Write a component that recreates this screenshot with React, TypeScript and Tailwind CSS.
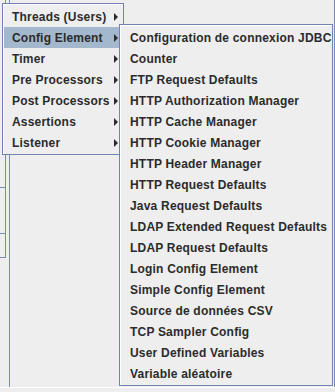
import React from 'react';

const mainItems = [
  'Threads (Users)',
  'Config Element',
  'Timer',
  'Pre Processors',
  'Post Processors',
  'Assertions',
  'Listener',
];

const configItems = [
  'Configuration de connexion JDBC',
  'Counter',
  'FTP Request Defaults',
  'HTTP Authorization Manager',
  'HTTP Cache Manager',
  'HTTP Cookie Manager',
  'HTTP Header Manager',
  'HTTP Request Defaults',
  'Java Request Defaults',
  'LDAP Extended Request Defaults',
  'LDAP Request Defaults',
  'Login Config Element',
  'Simple Config Element',
  'Source de données CSV',
  'TCP Sampler Config',
  'User Defined Variables',
  'Variable aléatoire',
];

const Arrow: React.FC = () => (
  <span className="ml-auto h-0 w-0 shrink-0 border-y-[4px] border-l-[4px] border-y-transparent border-l-[#2a2a2a]" />
);

const App: React.FC = () => {
  return (
    <div
      className="relative h-[392px] w-[335px] overflow-hidden bg-[#eeeeee] text-[12px] font-bold tracking-[0.2px] text-[#2b2b2b]"
      style={{ fontFamily: '"Liberation Sans", Arial, sans-serif' }}
    >
      {/* Window content underneath the popups */}
      <div className="flex h-[387px]">
        <div className="flex w-[6px] flex-col">
          <div className="h-[188px] border-r border-b border-[#7a8ab4]" />
          <div className="h-[46px] border-r border-b border-[#7a8ab4]" />
          <div className="h-[24px] border-r border-b border-[#7a8ab4]" />
        </div>
        <div className="w-[4px] border-r border-[#7a8ab4]" />
        <div className="flex-1 border-r border-[#7a8ab4]" />
      </div>
      <div className="h-[1px] bg-white" />

      {/* Add menu */}
      <div className="absolute left-[2px] top-[3px] w-[122px] border border-[#7183b0] bg-[#eeeeee]">
        <div className="border-t border-l border-white pt-[1px] pb-[1px]">
          {mainItems.map((label) => (
            <div
              key={label}
              className={`flex h-[21px] items-center pl-[8px] pr-[5px] ${
                label === 'Config Element' ? 'bg-[#a3b8cc]' : ''
              }`}
            >
              <span className="whitespace-nowrap">{label}</span>
              <Arrow />
            </div>
          ))}
        </div>
      </div>

      {/* Config Element submenu */}
      <div className="absolute left-[119px] top-[24px] w-[214px] border border-[#7183b0] bg-[#eeeeee]">
        <div className="border-t border-l border-white pt-[1px] pb-[1px]">
          {configItems.map((label) => (
            <div key={label} className="flex h-[21px] items-center pl-[9px]">
              <span className="whitespace-nowrap">{label}</span>
            </div>
          ))}
        </div>
      </div>
    </div>
  );
};

export default App;
